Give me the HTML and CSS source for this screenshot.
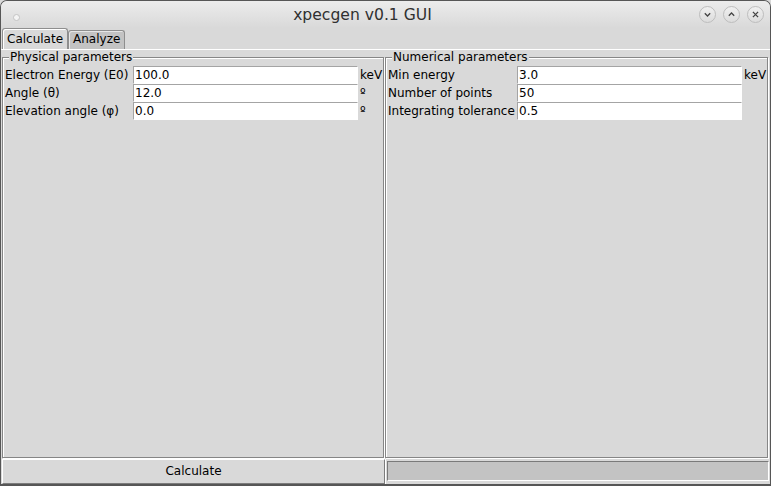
FILE: index.html
```html
<!DOCTYPE html>
<html>
<head>
<meta charset="utf-8">
<link rel="stylesheet" href="styles.css">
</head>
<body>
<div class="window">
  <div class="titlebar">
    <span class="dot"></span>
    <span class="title">xpecgen v0.1 GUI</span>
    <div class="controls">
      <span class="ctl"><svg width="17" height="17" viewBox="0 0 17 17"><path d="M5.8 7.3 L8.5 10 L11.2 7.3" fill="none" stroke="#444" stroke-width="1.3"/></svg></span>
      <span class="ctl"><svg width="17" height="17" viewBox="0 0 17 17"><path d="M5.8 9.7 L8.5 7 L11.2 9.7" fill="none" stroke="#444" stroke-width="1.3"/></svg></span>
      <span class="ctl"><svg width="17" height="17" viewBox="0 0 17 17"><path d="M5.9 5.9 L11.1 11.1 M11.1 5.9 L5.9 11.1" fill="none" stroke="#444" stroke-width="1.3"/></svg></span>
    </div>
  </div>
  <div class="tabs">
    <div class="tab active">Calculate</div>
    <div class="tab">Analyze</div>
  </div>
  <div class="body">
    <div class="panes">
      <fieldset class="frame frame-left">
        <legend>Physical parameters</legend>
        <div class="row"><span class="lbl">Electron Energy (E0)</span><span class="entry">100.0</span><span class="unit">keV</span></div>
        <div class="row"><span class="lbl">Angle (θ)</span><span class="entry">12.0</span><span class="unit">º</span></div>
        <div class="row"><span class="lbl">Elevation angle (φ)</span><span class="entry">0.0</span><span class="unit">º</span></div>
      </fieldset>
      <fieldset class="frame frame-right">
        <legend>Numerical parameters</legend>
        <div class="row"><span class="lbl">Min energy</span><span class="entry">3.0</span><span class="unit">keV</span></div>
        <div class="row"><span class="lbl">Number of points</span><span class="entry">50</span><span class="unit"></span></div>
        <div class="row"><span class="lbl">Integrating tolerance</span><span class="entry">0.5</span><span class="unit"></span></div>
      </fieldset>
    </div>
    <div class="bottom">
      <div class="button">Calculate</div>
      <div class="progress"><div class="trough"></div></div>
    </div>
  </div>
</div>
</body>
</html>
```
FILE: styles.css
```css
html, body {
  margin: 0;
  padding: 0;
  background: #d9d9d9;
}
body {
  font-family: "DejaVu Sans", sans-serif;
  font-size: 12px;
  color: #000;
}
.window {
  width: 771px;
  height: 486px;
  box-sizing: border-box;
  border: 1px solid #565656;
  border-bottom-width: 2px;
  border-radius: 7px 7px 0 0;
  overflow: hidden;
  display: flex;
  flex-direction: column;
  background: #d9d9d9;
}
.titlebar {
  height: 27px;
  flex: none;
  background: linear-gradient(#ececec, #d9d9d9);
  display: flex;
  align-items: center;
  position: relative;
}
.dot {
  width: 5px;
  height: 5px;
  border-radius: 50%;
  background: #f4f4f4;
  border: 1px solid #c4c4c4;
  margin: 5px 0 0 12px;
}
.title {
  position: absolute;
  left: 0;
  right: 46px;
  top: 5px;
  text-align: center;
  font-size: 15.6px;
  line-height: 18px;
  color: #303030;
}
.controls {
  margin-left: auto;
  margin-right: 6px;
  display: flex;
  gap: 7px;
  position: relative;
}
.ctl {
  width: 17px;
  height: 17px;
  box-sizing: border-box;
  border-radius: 50%;
  border: 1px solid #bdbdbd;
  background: linear-gradient(#f0f0f0, #dcdcdc);
  display: flex;
  align-items: center;
  justify-content: center;
}
.ctl svg {
  display: block;
  margin: -1px;
}
.tabs {
  height: 21px;
  flex: none;
  display: flex;
  align-items: flex-end;
  padding-left: 1px;
}
.tab {
  box-sizing: border-box;
  height: 19px;
  padding: 1px 4px 3px 4px;
  line-height: 14px;
  border: 1px solid #8e8e8e;
  border-bottom: none;
  border-radius: 3px 3px 0 0;
  background: #c3c3c3;
  box-shadow: inset 1px 1px 0 #e6e6e6;
}
.tab.active {
  height: 21px;
  padding-top: 3px;
  background: #d9d9d9;
  box-shadow: inset 1px 1px 0 #fff;
}
.body {
  flex: 1;
  display: flex;
  flex-direction: column;
  border-top: 1px solid #fff;
}
.panes {
  height: 408px;
  display: flex;
  gap: 1px;
  padding-left: 1px;
  padding-right: 2px;
}
.frame {
  margin: 0;
  padding: 2px 0 0 2px;
  min-width: 0;
  border: 1px solid #868686;
  box-shadow: inset 1px 1px 0 #fff, 1px 1px 0 #fff;
  box-sizing: border-box;
}
.frame-left {
  width: 382px;
}
.frame-right {
  flex: 1;
}
.frame legend {
  margin-left: 4px;
  padding: 0 1px;
  line-height: 14px;
  background: #d9d9d9;
  position: relative;
}
.row {
  display: grid;
  height: 18px;
  line-height: 18px;
}
.frame-left .row {
  grid-template-columns: 128px 225px 1fr;
}
.frame-right .row {
  grid-template-columns: 129px 225px 1fr;
}
.lbl {
  white-space: nowrap;
}
.entry {
  box-sizing: border-box;
  height: 18px;
  line-height: 16px;
  background: #fff;
  border-top: 1px solid #a4a4a4;
  border-left: 1px solid #a4a4a4;
  border-right: 1px solid #fff;
  border-bottom: 1px solid #fff;
  padding-left: 1px;
}
.unit {
  padding-left: 2px;
}
.bottom {
  margin-top: 1px;
  height: 25px;
  display: flex;
  padding-left: 1px;
}
.button {
  box-sizing: border-box;
  width: 383px;
  height: 25px;
  border-top: 1px solid #fff;
  border-left: 1px solid #fff;
  border-right: 1px solid #7c7c7c;
  border-bottom: 1px solid #7c7c7c;
  text-align: center;
  line-height: 22px;
  background: #d9d9d9;
}
.progress {
  flex: 1;
  box-sizing: border-box;
  padding: 2px 1px 1px 1px;
  border-left: 1px solid #fff;
}
.trough {
  box-sizing: border-box;
  height: 20px;
  background: #c3c3c3;
  border-top: 1px solid #7a7a7a;
  border-left: 1px solid #7a7a7a;
  border-right: 1px solid #fff;
  border-bottom: 1px solid #fff;
}
```
